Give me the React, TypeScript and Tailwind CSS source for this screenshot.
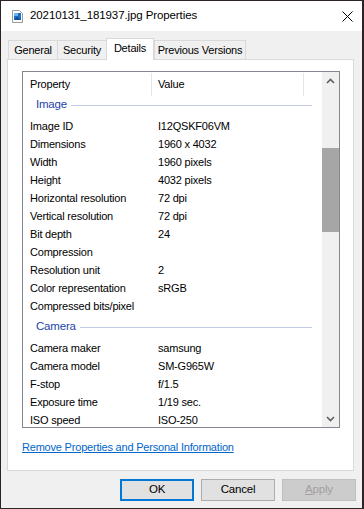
import React from 'react';

const font = { fontFamily: '"Liberation Sans", Arial, sans-serif' };

const imageRows: [string, string][] = [
  ['Image ID', 'I12QSKF06VM'],
  ['Dimensions', '1960 x 4032'],
  ['Width', '1960 pixels'],
  ['Height', '4032 pixels'],
  ['Horizontal resolution', '72 dpi'],
  ['Vertical resolution', '72 dpi'],
  ['Bit depth', '24'],
  ['Compression', ''],
  ['Resolution unit', '2'],
  ['Color representation', 'sRGB'],
  ['Compressed bits/pixel', ''],
];

const cameraRows: [string, string][] = [
  ['Camera maker', 'samsung'],
  ['Camera model', 'SM-G965W'],
  ['F-stop', 'f/1.5'],
  ['Exposure time', '1/19 sec.'],
  ['ISO speed', 'ISO-250'],
];

const Row = ({ name, value }: { name: string; value: string }) => (
  <div className="flex h-[18px] items-center shrink-0 text-black">
    <div className="w-[135px] pl-[7px] whitespace-nowrap">{name}</div>
    <div className="whitespace-nowrap">{value}</div>
  </div>
);

const Group = ({ label, h }: { label: string; h: string }) => (
  <div className={`flex items-center shrink-0 pl-[13px] pr-[10px] ${h}`}>
    <span className="text-[#2443a8] text-[11.5px]">{label}</span>
    <div className="flex-1 h-px bg-[#c2cbe8] ml-[4px]" />
  </div>
);

const Tab = ({ label, w, selected }: { label: string; w: string; selected?: boolean }) =>
  selected ? (
    <div
      className={`${w} h-[22px] -mb-px relative z-10 bg-white border border-b-0 border-[#d9d9d9] flex items-center justify-center text-black`}
    >
      <span className="-mt-[2px]">{label}</span>
    </div>
  ) : (
    <div
      className={`${w} h-[19px] bg-[#f0f0f0] border-t border-l border-[#d9d9d9] flex items-center justify-center text-black`}
    >
      {label}
    </div>
  );

export default function App() {
  return (
    <div className="w-[364px] h-[509px] bg-[#2b2324] pt-px pl-px text-[11px] tracking-[-0.2px]" style={font}>
      <div className="w-[361px] h-[507px] bg-[#f0f0f0] flex flex-col">
        {/* title bar */}
        <div className="h-[30px] bg-white flex items-center pl-[11px] shrink-0">
          <svg width="11" height="13" viewBox="0 0 11 13">
            <path d="M0.5 0.5 H7.5 L10.5 3.5 V12.5 H0.5 Z" fill="#fff" stroke="#9a9a9a" />
            <rect x="2" y="3" width="7" height="7" fill="#1f6fc5" />
            <rect x="2" y="3" width="4" height="3" fill="#69b4f0" />
            <path d="M2 10 L5 6.5 L9 10 Z" fill="#0f4f9a" />
          </svg>
          <span className="ml-[7px] text-black text-[11.5px] tracking-[-0.1px]">20210131_181937.jpg Properties</span>
          <svg className="ml-auto mr-[9px]" width="11" height="11" viewBox="0 0 11 11">
            <path d="M0.5 0.5 L10.5 10.5 M10.5 0.5 L0.5 10.5" stroke="#000" strokeWidth="1" />
          </svg>
        </div>

        {/* tabs */}
        <div className="flex items-end h-[21px] mt-[7px] pl-[7px] shrink-0">
          <Tab label="General" w="w-[49px]" />
          <Tab label="Security" w="w-[49px]" />
          <Tab label="Details" w="w-[48px]" selected />
          <div className="w-[92px] h-[19px] bg-[#f0f0f0] border-t border-x border-[#d9d9d9] flex items-center justify-center text-black">
            Previous Versions
          </div>
        </div>

        {/* tab page */}
        <div className="ml-[6px] w-[347px] h-[412px] bg-white border border-[#d9d9d9] flex flex-col shrink-0">
          <div className="ml-[14px] mt-[11px] w-[318px] h-[357px] border border-[#828790] flex overflow-hidden">
            <div className="flex-1 flex flex-col overflow-hidden">
              <div className="h-[24px] flex shrink-0 text-black">
                <div className="w-[128px] pl-[7px] flex items-center">Property</div>
                <div className="w-px mt-px bg-[#e5e5e5]" />
                <div className="w-[151px] pl-[6px] flex items-center">Value</div>
                <div className="w-px mt-px bg-[#e5e5e5]" />
              </div>
              <Group label="Image" h="h-[21px] pb-[3px]" />
              {imageRows.map(([n, v]) => (
                <Row key={n} name={n} value={v} />
              ))}
              <Group label="Camera" h="h-[24px]" />
              {cameraRows.map(([n, v]) => (
                <Row key={n} name={n} value={v} />
              ))}
            </div>
            {/* scrollbar */}
            <div className="w-[17px] bg-[#f0f0f0] flex flex-col shrink-0">
              <div className="h-[17px] flex items-center justify-center">
                <svg width="9" height="6" viewBox="0 0 9 6">
                  <path d="M1 5 L4.5 1.5 L8 5" fill="none" stroke="#606060" strokeWidth="1.6" />
                </svg>
              </div>
              <div className="flex-1">
                <div className="mt-[59px] h-[84px] bg-[#a6a6a6]" />
              </div>
              <div className="h-[17px] flex items-center justify-center">
                <svg width="9" height="6" viewBox="0 0 9 6">
                  <path d="M1 1 L4.5 4.5 L8 1" fill="none" stroke="#606060" strokeWidth="1.6" />
                </svg>
              </div>
            </div>
          </div>
          <div className="ml-[14px] mt-[13px] leading-[13px]">
            <span className="text-[#0066cc] underline">Remove Properties and Personal Information</span>
          </div>
        </div>

        {/* buttons */}
        <div className="flex justify-end gap-[7px] pr-[6px] mt-[8px] shrink-0">
          <div className="w-[74px] h-[22px] border-2 border-[#0078d7] bg-[#e1e1e1] flex items-center justify-center text-black text-[11.5px]">
            OK
          </div>
          <div className="w-[74px] h-[22px] border border-[#adadad] bg-[#e1e1e1] flex items-center justify-center text-black text-[11.5px]">
            Cancel
          </div>
          <div className="w-[74px] h-[22px] border border-[#bfbfbf] bg-[#cccccc] flex items-center justify-center text-[#a0a0a0] text-[11.5px]">
            <span>
              <span className="underline">A</span>pply
            </span>
          </div>
        </div>
      </div>
    </div>
  );
}
